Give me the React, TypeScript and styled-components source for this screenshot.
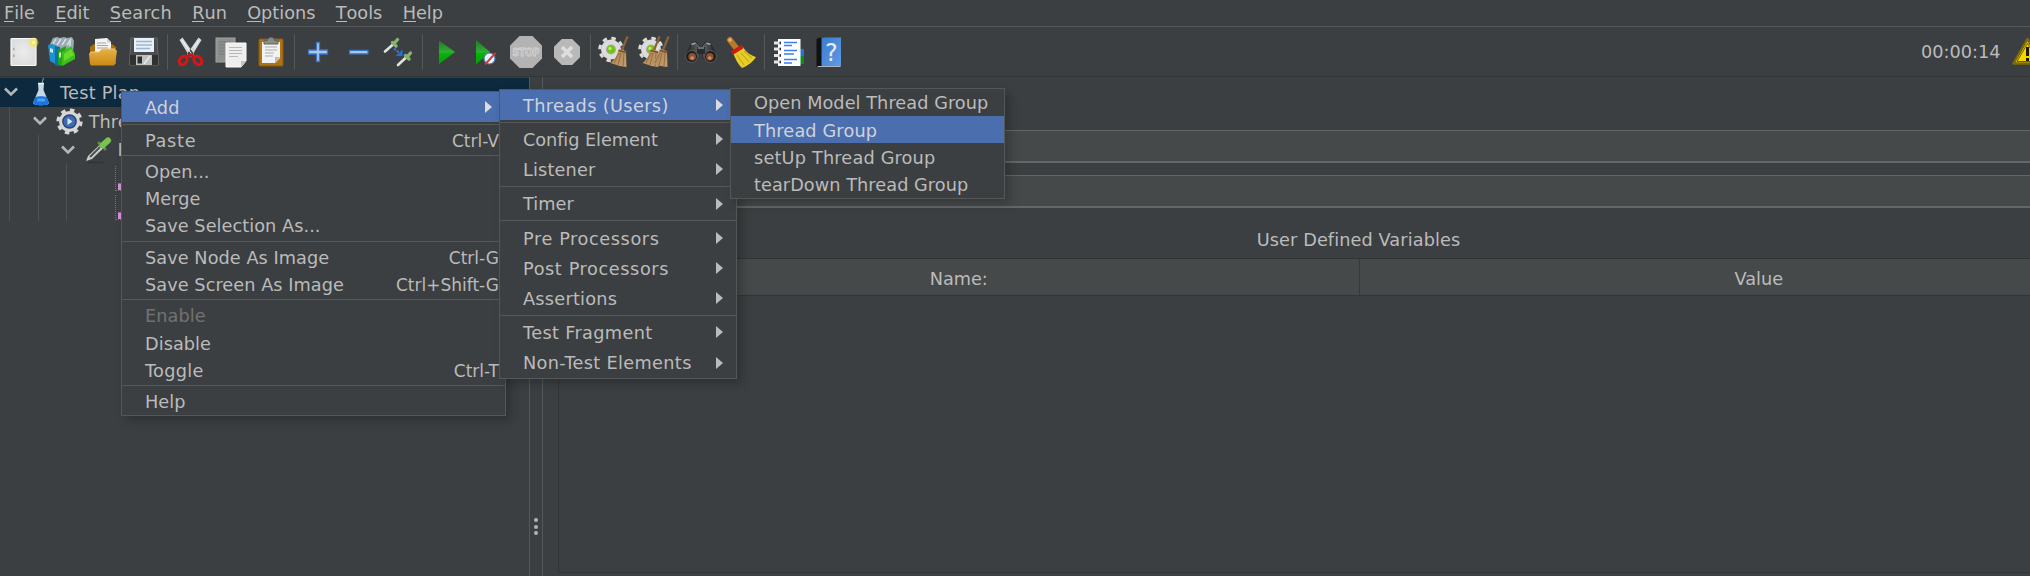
import React from "react";
import styled, { createGlobalStyle, css } from "styled-components";

const Global = createGlobalStyle`
  * { box-sizing: border-box; }
  html, body { margin: 0; background: #3c3f41; overflow: hidden; }
`;

const Window = styled.div`
  position: relative;
  display: flex;
  flex-direction: column;
  width: 2030px;
  height: 576px;
  overflow: hidden;
  background: #3c3f41;
  color: #bbbbbb;
  font: 17.7px/20px "DejaVu Sans", sans-serif;
  white-space: nowrap;
`;

const MenuBar = styled.nav`
  display: flex;
  gap: 20.3px;
  flex: none;
  height: 27px;
  padding: 3px 4px 0;
  border-bottom: 1px solid #545657;
`;

const MenuTitle = styled.span<{ $track?: number }>`
  letter-spacing: ${(p) => p.$track ?? 0}px;
`;

const Mnemonic = styled.span`
  display: inline-block;
  height: 18.5px;
  border-bottom: 1px solid #bbbbbb;
`;

const Toolbar = styled.div`
  display: flex;
  align-items: center;
  flex: none;
  height: 50px;
  padding-left: 3px;
  border-bottom: 1px solid #323536;
`;

const ToolButton = styled.div`
  display: flex;
  align-items: center;
  justify-content: center;
  flex: none;
  width: 40.2px;
  height: 40px;
`;

const ToolDivider = styled.div`
  flex: none;
  width: 1px;
  height: 36px;
  margin: 0 3px;
  background: #555758;
`;

const Clock = styled.div`
  flex: none;
  margin-left: auto;
  padding: 1px 11px 0 0;
`;

const WarningSlot = styled.div`
  flex: none;
  width: 18.5px;
  height: 30px;
  overflow: hidden;
`;

const Body = styled.main`
  display: flex;
  flex: 1;
  min-height: 0;
`;

const Tree = styled.aside`
  flex: none;
  width: 529px;
  padding-top: 1px;
`;

const TreeRow = styled.div<{ $depth: number; $selected?: boolean }>`
  display: flex;
  align-items: center;
  height: 28.7px;
  padding-left: ${(p) => 3 + p.$depth * 28.7}px;
  background: ${(p) => (p.$selected ? "#0d293e" : "transparent")};
  background-image: ${(p) =>
    p.$depth === 0
      ? "none"
      : "repeating-linear-gradient(90deg, transparent 0 9px, #505354 9px 10px, transparent 10px 28.7px)"};
  background-size: ${(p) => p.$depth * 28.7}px 100%;
  background-repeat: no-repeat;
`;

const TreeIcon = styled.span`
  display: flex;
  justify-content: center;
  width: 28px;
  margin: 0 5px 0 8px;
`;

const LeafMark = styled.span`
  display: flex;
  align-items: flex-end;
  width: 24px;
  height: 25px;
  margin-left: 26px;
  border: 1px dotted #737576;
  border-top: 0;
  padding: 0 0 0 2px;
`;

const Pink = styled.span`
  width: 12px;
  height: 7px;
  background: #d291d8;
  border-top: 1px solid #b65a9a;
`;

const Splitter = styled.div`
  display: flex;
  flex-direction: column;
  align-items: center;
  gap: 2.6px;
  flex: none;
  width: 14px;
  padding-top: 441px;
  border-left: 1px solid #555758;
  border-right: 1px solid #555758;
`;

const Grip = styled.span`
  width: 4px;
  height: 4px;
  border-radius: 50%;
  background: #b4b4b4;
`;

const Panel = styled.section`
  flex: none;
  width: 1616px;
  padding: 53px 0 0 15px;
`;

const Field = styled.div<{ $gap?: number }>`
  height: 33.4px;
  margin-bottom: ${(p) => p.$gap ?? 0}px;
  background: #45494a;
  border: 1px solid #646667;
  border-bottom-width: 2px;
`;

const TableTitle = styled.div`
  height: 49.6px;
  padding-top: 22px;
  text-align: center;
  letter-spacing: 0.1px;
`;

const Table = styled.div`
  height: 315px;
  border: 1px solid #323536;
`;

const HeaderRow = styled.div`
  display: grid;
  grid-template-columns: 1fr 1fr;
  height: 37px;
  background: #45494a;
  border-bottom: 1px solid #323536;
`;

const HeaderCell = styled.div`
  padding-top: 10px;
  text-align: center;
  & + & {
    border-left: 1px solid #36393b;
  }
`;

const Popup = styled.div<{ $x: number; $y: number; $w: number }>`
  position: absolute;
  left: ${(p) => p.$x}px;
  top: ${(p) => p.$y}px;
  width: ${(p) => p.$w}px;
  background: #3c3f41;
  border: 1px solid #555657;
  box-shadow: 5px 5px 9px rgba(0, 0, 0, 0.22);
`;

const Item = styled.div<{ $tall?: boolean; $active?: boolean; $disabled?: boolean }>`
  display: flex;
  align-items: center;
  justify-content: space-between;
  height: ${(p) => (p.$tall ? 30.1 : 27.2)}px;
  padding: 0 6px 0 23px;
  ${(p) => p.$active && css`background: #4b6eaf; color: #cfd3da;`}
  ${(p) => p.$disabled && css`color: #717273;`}
`;

const Label = styled.span<{ $track?: number }>`
  padding-top: 1.5px;
  letter-spacing: ${(p) => p.$track ?? 0.06}px;
`;

const Shortcut = styled.span`
  padding-top: 1.5px;
  font-size: 17px;
`;

const Arrow = styled.span<{ $active?: boolean }>`
  width: 0;
  height: 0;
  margin-right: 7.5px;
  border: 6px solid transparent;
  border-left: 7px solid ${(p) => (p.$active ? "#dcdcdc" : "#bbbbbb")};
  border-right: 0;
`;

const Rule = styled.hr`
  height: 4.2px;
  margin: 0;
  border: 0;
  background: linear-gradient(#555758, #555758) 0 1.5px / 100% 1.4px no-repeat;
`;

type Entry = {
  text: string;
  keys?: string;
  sub?: boolean;
  active?: boolean;
  disabled?: boolean;
  track?: number;
} | null;

const contextMenu: Entry[] = [
  { text: "Add", sub: true, active: true },
  null,
  { text: "Paste", keys: "Ctrl-V", track: 0.7 },
  null,
  { text: "Open..." },
  { text: "Merge" },
  { text: "Save Selection As..." },
  null,
  { text: "Save Node As Image", keys: "Ctrl-G" },
  { text: "Save Screen As Image", keys: "Ctrl+Shift-G" },
  null,
  { text: "Enable", disabled: true },
  { text: "Disable" },
  { text: "Toggle", keys: "Ctrl-T", track: 0.3 },
  null,
  { text: "Help" },
];

const addMenu: Entry[] = [
  { text: "Threads (Users)", sub: true, active: true, track: 0.38 },
  null,
  { text: "Config Element", sub: true, track: -0.06 },
  { text: "Listener", sub: true, track: 0.15 },
  null,
  { text: "Timer", sub: true },
  null,
  { text: "Pre Processors", sub: true, track: 0.6 },
  { text: "Post Processors", sub: true, track: 0.6 },
  { text: "Assertions", sub: true, track: 0.25 },
  null,
  { text: "Test Fragment", sub: true, track: 0.35 },
  { text: "Non-Test Elements", sub: true, track: 0.34 },
];

const threadsMenu: Entry[] = [
  { text: "Open Model Thread Group" },
  { text: "Thread Group", active: true, track: 0.15 },
  { text: "setUp Thread Group", track: 0.18 },
  { text: "tearDown Thread Group" },
];

function Menu({ x, y, w, entries }: { x: number; y: number; w: number; entries: Entry[] }) {
  return (
    <Popup $x={x} $y={y} $w={w}>
      {entries.map((e, i) =>
        e === null ? (
          <Rule key={i} />
        ) : (
          <Item key={i} $tall={e.sub} $active={e.active} $disabled={e.disabled}>
            <Label $track={e.track}>{e.text}</Label>
            {e.keys && <Shortcut>{e.keys}</Shortcut>}
            {e.sub && <Arrow $active={e.active} />}
          </Item>
        )
      )}
    </Popup>
  );
}

const IconSvg = styled.svg`
  display: block;
  width: 32px;
  height: 32px;
`;

function Svg({ children }: { children: React.ReactNode }) {
  return (
    <IconSvg viewBox="0 0 32 32" fill="none">
      {children}
    </IconSvg>
  );
}

const Defs = () => (
  <svg width="0" height="0" display="block">
    <defs>
      <linearGradient id="play" x1="0" y1="0" x2="0" y2="1">
        <stop offset="0" stopColor="#1f7a26" />
        <stop offset="0.5" stopColor="#2fae33" />
        <stop offset="0.55" stopColor="#06b406" />
        <stop offset="1" stopColor="#04a004" />
      </linearGradient>
      <linearGradient id="folder" x1="0" y1="0" x2="0" y2="1">
        <stop offset="0" stopColor="#e6b04a" />
        <stop offset="1" stopColor="#c98a10" />
      </linearGradient>
      <linearGradient id="book" x1="0" y1="0" x2="1" y2="1">
        <stop offset="0" stopColor="#3c7ccb" />
        <stop offset="1" stopColor="#5e9be6" />
      </linearGradient>
      <linearGradient id="straw" x1="0" y1="0" x2="1" y2="1">
        <stop offset="0" stopColor="#a98152" />
        <stop offset="1" stopColor="#c79f6d" />
      </linearGradient>
      <linearGradient id="barrel" x1="0" y1="0" x2="1" y2="0">
        <stop offset="0" stopColor="#1d1e1f" />
        <stop offset="0.5" stopColor="#6b6d6f" />
        <stop offset="1" stopColor="#1d1e1f" />
      </linearGradient>
      <radialGradient id="paper">
        <stop offset="0" stopColor="#ececec" />
        <stop offset="1" stopColor="#dedede" />
      </radialGradient>
      <radialGradient id="glow">
        <stop offset="0" stopColor="#fffde0" />
        <stop offset="0.45" stopColor="#f3e45c" />
        <stop offset="1" stopColor="#f3e45c" stopOpacity="0" />
      </radialGradient>
    </defs>
  </svg>
);

const NewIcon = () => (
  <Svg>
    <rect x="4" y="2.5" width="25" height="27" rx="1" fill="url(#paper)" stroke="#f8f8f8" strokeWidth="1.2" />
    <path d="M6.8 11.8v2.4M6.8 18.5v2.4" stroke="#a9a9a9" strokeWidth="1.6" />
    <circle cx="26.5" cy="6.5" r="5.6" fill="url(#glow)" />
  </Svg>
);

const TemplatesIcon = () => (
  <Svg>
    <path d="M3 8l3-6 4-1 3 1 4-1 3 1 5-1 2 4-1 11H5z" fill="#9aabb2" />
    <path d="M6 8l3-5M10 9l4-6M15 9l4-6M20 9l4-6M23 5v7" stroke="#d9e1e4" strokeWidth="1.4" />
    <path d="M1 9l4-1 5 2v19l-7-4z" fill="#1b93d3" />
    <path d="M3 12l3 1v4l-3-1z" fill="#bfe4f7" />
    <path d="M8 10l5 1v18l-3 1-2-1z" fill="#0d6fae" />
    <path d="M11 14l8-4v18l-6 2-2-2z" fill="#1fa516" />
    <path d="M15 16l9-6 4 8v5l-13 7z" fill="#3cc018" />
    <path d="M17 18l7-5 3 6-10 6z" fill="#66d92d" />
    <path d="M12 17l2-1v5l-2 1z" fill="#c4f3b4" />
  </Svg>
);

const OpenIcon = () => (
  <Svg>
    <path d="M3 11l4-3h18l4 3v17H3z" fill="#a8700c" />
    <path d="M8 3l12-1 4 4v12H8z" fill="#f3f3f3" />
    <path d="M20 2v4.500h4" fill="#cfcfcf" />
    <path d="M10 7h9M10 9.500h11M10 12h11" stroke="#a5a5a5" />
    <path d="M2 18l2-2h8l3-3h13l2 2-2 13-1 1.500H4L3 28z" fill="url(#folder)" />
    <path d="M2.500 17.500L4 16h8l3-3h13" stroke="#f1c977" />
  </Svg>
);

const SaveIcon = () => (
  <Svg>
    <path d="M3 2h26l1.500 27H1.500z" fill="#4b4c4e" stroke="#67696b" />
    <path d="M2 19h28v10H2z" fill="#303133" />
    <rect x="6" y="2" width="20" height="14" fill="#e9f1f8" />
    <path d="M8 5.500h16M8 9h16M8 12.500h14" stroke="#9cb6cf" strokeWidth="1.4" />
    <rect x="8" y="19" width="16" height="10" fill="#bfc1c1" />
    <rect x="9.500" y="20.500" width="4.500" height="7" fill="#2d2e30" />
    <path d="M16 28l6-8" stroke="#e9e9e9" strokeWidth="1.500" />
  </Svg>
);

const CutIcon = () => (
  <Svg>
    <path d="M4.500 4l3-2.500L19 18l-3.500 4zM26.500 4l-3-2.500L12 18l3.500 4z" fill="#d6d6d6" />
    <path d="M7 4l9.500 14M24 4l-5 7.500" stroke="#f8f8f8" />
    <ellipse cx="8.200" cy="24.500" rx="3.500" ry="4.700" transform="rotate(35 8.200 24.500)" stroke="#dc1414" strokeWidth="3" />
    <ellipse cx="22.800" cy="24.500" rx="3.500" ry="4.700" transform="rotate(-35 22.800 24.500)" stroke="#dc1414" strokeWidth="3" />
    <path d="M10 20l5.500-3 5.500 3-3 1-2.500-1-2.500 1z" fill="#d01010" />
  </Svg>
);

const CopyIcon = () => (
  <Svg>
    <rect x="1" y="2" width="19" height="24" fill="#8e9090" stroke="#a2a3a3" />
    <path d="M4 6h12M4 9h12M4 12h8M4 15h6M4 18h6" stroke="#777979" />
    <path d="M11 7h20v18l-5 6H11z" fill="#eeeeee" stroke="#fafafa" />
    <path d="M14 11.500h13M14 14.500h13M14 17.500h13M14 20.500h9" stroke="#b9b9b9" />
    <path d="M31 25h-5v6z" fill="#c2c2c2" />
  </Svg>
);

const PasteIcon = () => (
  <Svg>
    <rect x="4" y="3" width="24" height="27" rx="1" fill="#ad7315" stroke="#8b5b0d" />
    <path d="M7 6h18v16l-5 5H7z" fill="#f2f2f2" />
    <path d="M25 21h-5v6z" fill="#bdbdbd" />
    <path d="M10 11h12M10 14h12M10 17h9M10 20h8" stroke="#adadad" />
    <path d="M9 4.500h3.500c0-4 7-4 7 0H23V8H9z" fill="#8a8d86" stroke="#62655f" />
  </Svg>
);

const PlusIcon = () => (
  <Svg>
    <path
      d="M6.500 14h8V6.500h3V14h8v4h-8v7.500h-3V18h-8z"
      fill="#a9c6ee"
      stroke="#3a76c8"
      strokeWidth="1.300"
      strokeLinejoin="round"
    />
  </Svg>
);

const MinusIcon = () => (
  <Svg>
    <path d="M6.500 14.300h18.500v3.600H6.500z" fill="#a9c6ee" stroke="#3a76c8" strokeWidth="1.300" strokeLinejoin="round" />
  </Svg>
);

const ToggleIcon = () => (
  <Svg>
    <path d="M2 15.500l8-7" stroke="#e0e4e0" strokeWidth="2.600" strokeLinecap="round" />
    <path d="M9.500 6.500l3.500 3.500M11.500 7L14.500 3.500" stroke="#86b272" strokeWidth="3.400" strokeLinecap="round" />
    <path d="M15 29l8-7.500" stroke="#e0e4e0" strokeWidth="2.600" strokeLinecap="round" />
    <path d="M22.500 19.500l3.500 3.500M24.500 20.500l3-3.500" stroke="#86b272" strokeWidth="3.400" strokeLinecap="round" />
    <path d="M11 12.500l5 4" stroke="#2f76ea" strokeWidth="2" strokeDasharray="2.500 1" />
    <path d="M19.500 13.500v6.500h-7z" fill="#1f6cf0" />
  </Svg>
);

const PlayIcon = () => (
  <Svg>
    <path d="M9 4.500L25 16 9 28z" fill="url(#play)" />
  </Svg>
);

const PlayNoPauseIcon = () => (
  <Svg>
    <path d="M6 4L20 16 6 28.500z" fill="url(#play)" />
    <circle cx="19.500" cy="22.500" r="5.500" fill="#e9f0fa" stroke="#4f7bb8" strokeWidth="1.200" />
    <path d="M15 28.500l10.500-11.500" stroke="#d8382c" strokeWidth="1.900" />
  </Svg>
);

const StopText = styled.text`
  font-family: "DejaVu Sans Condensed", "DejaVu Sans", sans-serif;
  font-size: 10.5px;
  font-weight: bold;
`;

const StopIcon = () => (
  <Svg>
    <path d="M9.500 0h13L32 9.500v13L22.500 32h-13L0 22.500v-13z" fill="#b3b3b3" />
    <StopText x="2.500" y="19.800" textLength="27" lengthAdjust="spacingAndGlyphs" fill="#b0b0b0" stroke="#d6d6d6" strokeWidth="0.8">
      STOP
    </StopText>
  </Svg>
);

const ShutdownIcon = () => (
  <Svg>
    <path d="M10.800 3h10.400L29 10.800v10.400L21.200 29H10.800L3 21.200V10.800z" fill="#b9b9b9" />
    <path d="M11 11l10 10M21 11L11 21" stroke="#dedede" strokeWidth="3.600" />
  </Svg>
);

const Gear = () => (
  <g>
    <circle cx="13" cy="13.500" r="10" fill="#dcdcdc" />
    <circle cx="13" cy="13.500" r="11.200" stroke="#dcdcdc" strokeWidth="3" strokeDasharray="4.400 4.400" />
    <circle cx="13" cy="13.500" r="5" fill="#a9aba7" />
    <circle cx="13" cy="13.500" r="4" fill="#74c414" />
    <circle cx="12" cy="12.500" r="1.700" fill="#b7ee62" />
  </g>
);

const Broom = ({ dx = 0 }: { dx?: number }) => (
  <g transform={`translate(${dx} 0)`}>
    <path d="M27.500 0.500L22 14" stroke="#8b6337" strokeWidth="2.200" />
    <path d="M19 13l7 2 .5 16-7-1-9-3c5-4 7-9 8.500-14z" fill="url(#straw)" />
    <path d="M19 17l-5 10M21 17l-3 12M24 17l-1 13" stroke="#8d6a41" strokeWidth="0.900" />
    <path d="M18.500 14.500l8 2" stroke="#765030" strokeWidth="1.300" />
  </g>
);

const ClearIcon = () => (
  <Svg>
    <Gear />
    <Broom dx={2} />
  </Svg>
);

const ClearAllIcon = () => (
  <Svg>
    <Gear />
    <Broom dx={-6} />
    <Broom dx={3} />
  </Svg>
);

const SearchIcon = () => (
  <Svg>
    <path d="M1 18L7 7l4-1 4 4-1 12-8 2zM31 18L25 7l-4-1-4 4 1 12 8 2z" fill="url(#barrel)" stroke="#202122" strokeWidth="0.800" />
    <path d="M12 11h8v7h-8z" fill="#2a2b2c" />
    <path d="M13 12h6" stroke="#85888a" strokeWidth="1.500" />
    <path d="M6.500 8.500l4-1.500M25.500 8.500l-4-1.500" stroke="#a5a8aa" strokeWidth="1.500" />
    <circle cx="6.500" cy="20.500" r="6" fill="#1e1e1e" stroke="#5a5b5c" />
    <circle cx="25.500" cy="20.500" r="6" fill="#1e1e1e" stroke="#5a5b5c" />
    <circle cx="7.200" cy="20.800" r="3.800" fill="#8f4f2c" />
    <circle cx="24.800" cy="20.800" r="3.800" fill="#8f4f2c" />
    <circle cx="7.200" cy="22" r="1.800" fill="#d08e62" />
    <circle cx="24.800" cy="22" r="1.800" fill="#d08e62" />
  </Svg>
);

const ResetIcon = () => (
  <Svg>
    <path d="M5 4l7 9" stroke="#b87a2a" strokeWidth="6" strokeLinecap="round" />
    <circle cx="5" cy="4" r="1.700" fill="#e8b671" />
    <path d="M8 17l10-6c3 5 7 8 13 10-3 5-9 9-14 11-4-4-6-8-9-15z" fill="#e6cd28" />
    <path d="M12 19l7 10M16 17l8 9M19 15l8 7" stroke="#c4a614" strokeWidth="1.100" />
    <path d="M7 17l10.500-6.500" stroke="#cf1a14" strokeWidth="4" />
  </Svg>
);

const FunctionIcon = () => (
  <Svg>
    <path d="M26 13h6v7h-6z" fill="#2573d6" />
    <path d="M26 20h6v8h-6z" fill="#118a18" />
    <rect x="6" y="3" width="22.500" height="27" fill="#fff" />
    <path d="M2 7h7M2 13h7M2 19.500h7M2 26h7" stroke="#e5e5e5" strokeWidth="3" />
    <path d="M7.500 7h1.500M7.500 13h1.500M7.500 19.500h1.500M7.500 26h1.500" stroke="#333" strokeWidth="2.400" />
    <path d="M12 6.500h13M12 9.500h8M12 14.500h13M12 18h10M12 23.500h13M12 27h8" stroke="#3b7ff0" strokeWidth="1.500" />
  </Svg>
);

const HelpText = styled.text`
  font-family: "DejaVu Sans", sans-serif;
  font-size: 24px;
`;

const HelpIcon = () => (
  <Svg>
    <path d="M3.500 3L7 1.500h4V31H3.500z" fill="#101112" />
    <rect x="8.500" y="1.500" width="19.500" height="28.500" fill="url(#book)" />
    <path d="M4.500 30.500h23" stroke="#aeb2b8" />
    <HelpText x="12" y="24.500" fill="#e3eefb">
      ?
    </HelpText>
  </Svg>
);

const WarningIcon = () => (
  <svg width="31" height="30" viewBox="0 0 31 30" fill="none">
    <path d="M15.500 2L30 26.500H1.500z" fill="#f7d600" stroke="#7d6a08" strokeWidth="2.500" strokeLinejoin="round" />
    <path d="M15.500 6.500L26 24.500H5z" stroke="#4a4108" strokeWidth="0.800" />
    <path d="M15.500 10v9M15.500 21v3" stroke="#1b1a10" strokeWidth="3" />
  </svg>
);

const Chevron = () => (
  <svg width="16" height="16" viewBox="0 0 16 16" fill="none">
    <path d="M2 4.500l6 6 6-6" stroke="#b4b6b8" strokeWidth="2.600" />
  </svg>
);

const FlaskIcon = () => (
  <svg width="18" height="28" viewBox="0 0 18 28" fill="none">
    <path d="M10 5l1.500-5" stroke="#8fa3b3" />
    <path d="M6 5h6l-.5 7 5.500 13c0 3-16 3-16 0L6.500 12z" fill="#c6d8e6" />
    <path d="M3.500 19c3-1 8-1 11 0l2.500 6c0 3-16 3-16 0z" fill="#1974dd" />
    <path d="M5.500 20.500h7l1 3H5z" fill="#4aa3f5" />
    <path d="M6 5.500h6" stroke="#eef5fa" strokeWidth="1.500" />
  </svg>
);

const ThreadIcon = () => (
  <svg width="27" height="27" viewBox="0 0 27 27" fill="none">
    <circle cx="13.500" cy="13.500" r="10.500" fill="#d6d6d6" />
    <circle cx="13.500" cy="13.500" r="11.400" stroke="#d6d6d6" strokeWidth="3.400" strokeDasharray="4.480 4.480" />
    <circle cx="13.500" cy="13.500" r="6.600" fill="#3f6cb0" stroke="#2a4474" strokeWidth="1.500" />
    <path d="M11.500 10l5 3.500-5 3.500z" fill="#d6e4f5" />
  </svg>
);

const DropperIcon = () => (
  <svg width="28" height="28" viewBox="0 0 28 28" fill="none">
    <path d="M4 26.500h16" stroke="#303234" strokeWidth="1.500" />
    <path d="M2 25l2-5L16 8.500l3.500 3.500L8 23z" fill="#c9ccc8" />
    <path d="M6 21l10-10" stroke="#4a4e4b" strokeWidth="1.800" />
    <path d="M15 7l6 6" stroke="#5b9440" strokeWidth="3" strokeLinecap="round" />
    <path d="M19 9l5-4.500" stroke="#79c350" strokeWidth="6" strokeLinecap="round" />
  </svg>
);

const toolGroups: React.FC[][] = [
  [NewIcon, TemplatesIcon, OpenIcon, SaveIcon],
  [CutIcon, CopyIcon, PasteIcon],
  [PlusIcon, MinusIcon, ToggleIcon],
  [PlayIcon, PlayNoPauseIcon, StopIcon, ShutdownIcon],
  [ClearIcon, ClearAllIcon],
  [SearchIcon, ResetIcon],
  [FunctionIcon, HelpIcon],
];

const menus = [
  { title: "File" },
  { title: "Edit" },
  { title: "Search", track: 0.22 },
  { title: "Run" },
  { title: "Options" },
  { title: "Tools" },
  { title: "Help" },
];

export default function App() {
  return (
    <Window>
      <Global />
      <Defs />
      <MenuBar>
        {menus.map(({ title, track }) => (
          <MenuTitle key={title} $track={track}>
            <Mnemonic>{title[0]}</Mnemonic>
            {title.slice(1)}
          </MenuTitle>
        ))}
      </MenuBar>
      <Toolbar>
        {toolGroups.map((group, g) => (
          <React.Fragment key={g}>
            {g > 0 && <ToolDivider />}
            {group.map((Icon, i) => (
              <ToolButton key={i}>
                <Icon />
              </ToolButton>
            ))}
          </React.Fragment>
        ))}
        <Clock>00:00:14</Clock>
        <WarningSlot>
          <WarningIcon />
        </WarningSlot>
      </Toolbar>
      <Body>
        <Tree>
          <TreeRow $depth={0} $selected>
            <Chevron />
            <TreeIcon><FlaskIcon /></TreeIcon>
            <Label $track={0.25}>Test Plan</Label>
          </TreeRow>
          <TreeRow $depth={1}>
            <Chevron />
            <TreeIcon><ThreadIcon /></TreeIcon>
            <Label>Thread Group</Label>
          </TreeRow>
          <TreeRow $depth={2}>
            <Chevron />
            <TreeIcon><DropperIcon /></TreeIcon>
            <Label>HTTP Request</Label>
          </TreeRow>
          <TreeRow $depth={3}>
            <LeafMark><Pink /></LeafMark>
          </TreeRow>
          <TreeRow $depth={3}>
            <LeafMark><Pink /></LeafMark>
          </TreeRow>
        </Tree>
        <Splitter>
          <Grip />
          <Grip />
          <Grip />
        </Splitter>
        <Panel>
          <Field $gap={11.6} />
          <Field />
          <TableTitle>User Defined Variables</TableTitle>
          <Table>
            <HeaderRow>
              <HeaderCell>Name:</HeaderCell>
              <HeaderCell>Value</HeaderCell>
            </HeaderRow>
          </Table>
        </Panel>
      </Body>
      <Menu x={121} y={91} w={385} entries={contextMenu} />
      <Menu x={499} y={89} w={238} entries={addMenu} />
      <Menu x={730} y={88} w={275} entries={threadsMenu} />
    </Window>
  );
}
